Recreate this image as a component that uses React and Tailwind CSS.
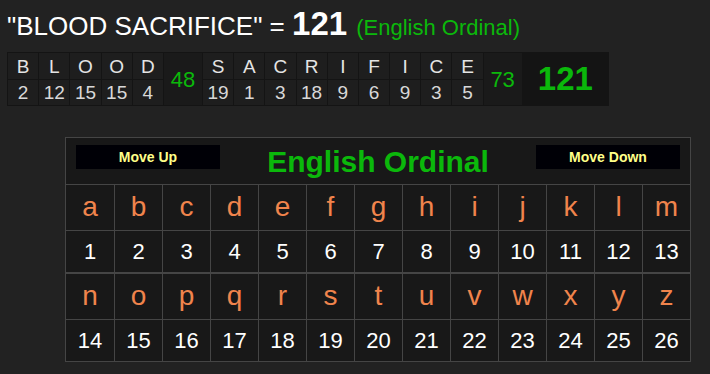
import React from "react";

const w1 = [["B", 2], ["L", 12], ["O", 15], ["O", 15], ["D", 4]];
const w2 = [["S", 19], ["A", 1], ["C", 3], ["R", 18], ["I", 9], ["F", 6], ["I", 9], ["C", 3], ["E", 5]];

function Letters({ items }) {
  return items.map(([l, n], i) => (
    <div key={i} className="flex flex-col gap-px w-[30.2px] shrink-0">
      <div className="h-[26px] bg-[#1e1e1e] flex items-center justify-center text-[19px] leading-none text-[#e4e4e4]">
        {l}
      </div>
      <div className="h-[25px] bg-[#1e1e1e] flex items-center justify-center text-[19px] leading-none text-[#d8d8d8]">
        {n}
      </div>
    </div>
  ));
}

const alpha = "abcdefghijklmnopqrstuvwxyz".split("");

function Half({ start }) {
  const letters = alpha.slice(start, start + 13);
  return (
    <div className="grid grid-cols-[repeat(13,48px)]">
      {letters.map((l, i) => (
        <div
          key={"l" + i}
          className={
            "h-[45px] flex items-center justify-center text-[28px] leading-none text-[#f0844c] pb-[2px] " +
            (i > 0 ? "border-l border-[#454545]" : "")
          }
        >
          {l}
        </div>
      ))}
      {letters.map((l, i) => (
        <div
          key={"n" + i}
          className={
            "h-[42px] flex items-center justify-center text-[22px] leading-none text-white border-t border-[#454545] " +
            (i > 0 ? "border-l" : "")
          }
        >
          {start + i + 1}
        </div>
      ))}
    </div>
  );
}

export default function App() {
  return (
    <div className="min-h-screen bg-[#222222] font-['Liberation_Sans',Arial,sans-serif] overflow-hidden">
      <div className="pl-[7px] pt-[9px] h-[52px] flex items-baseline text-white whitespace-nowrap">
        <span className="text-[26px] leading-[30px]">"BLOOD SACRIFICE" =&nbsp;</span>
        <span className="text-[33px] leading-[30px] font-bold">121</span>
        <span className="text-[22px] leading-[30px] text-[#0bb80b] pl-[3px]">&nbsp;(English Ordinal)</span>
      </div>
      <div className="ml-[7px] w-[602px] h-[54px] bg-[#141414] flex gap-px p-px">
        <Letters items={w1} />
        <div className="w-[38px] shrink-0 bg-[#1a1a1a] flex items-center justify-center text-[22px] text-[#0bb80b]">48</div>
        <Letters items={w2} />
        <div className="w-[38px] shrink-0 bg-[#1a1a1a] flex items-center justify-center text-[22px] text-[#0bb80b]">73</div>
        <div className="flex-1 bg-[#141414] flex items-center justify-center text-[33px] font-bold text-[#0bb80b] pb-[1px]">121</div>
      </div>
      <div className="ml-[65px] mt-[31px] w-[626px] border border-[#454545] bg-[#181818]">
        <div className="h-[47px] flex items-start justify-between px-[10px] pt-[7px] border-b border-[#454545]">
          <div className="w-[144px] h-[24px] bg-[#000006] flex items-center justify-center text-[14px] font-bold text-[#ffff88]">
            Move Up
          </div>
          <div className="text-[30px] font-bold text-[#0bb80b] leading-none pt-[2px]">English Ordinal</div>
          <div className="w-[144px] h-[24px] bg-[#000006] flex items-center justify-center text-[14px] font-bold text-[#ffff88]">
            Move Down
          </div>
        </div>
        <Half start={0} />
        <div className="border-t-2 border-[#454545]">
          <Half start={13} />
        </div>
      </div>
    </div>
  );
}
